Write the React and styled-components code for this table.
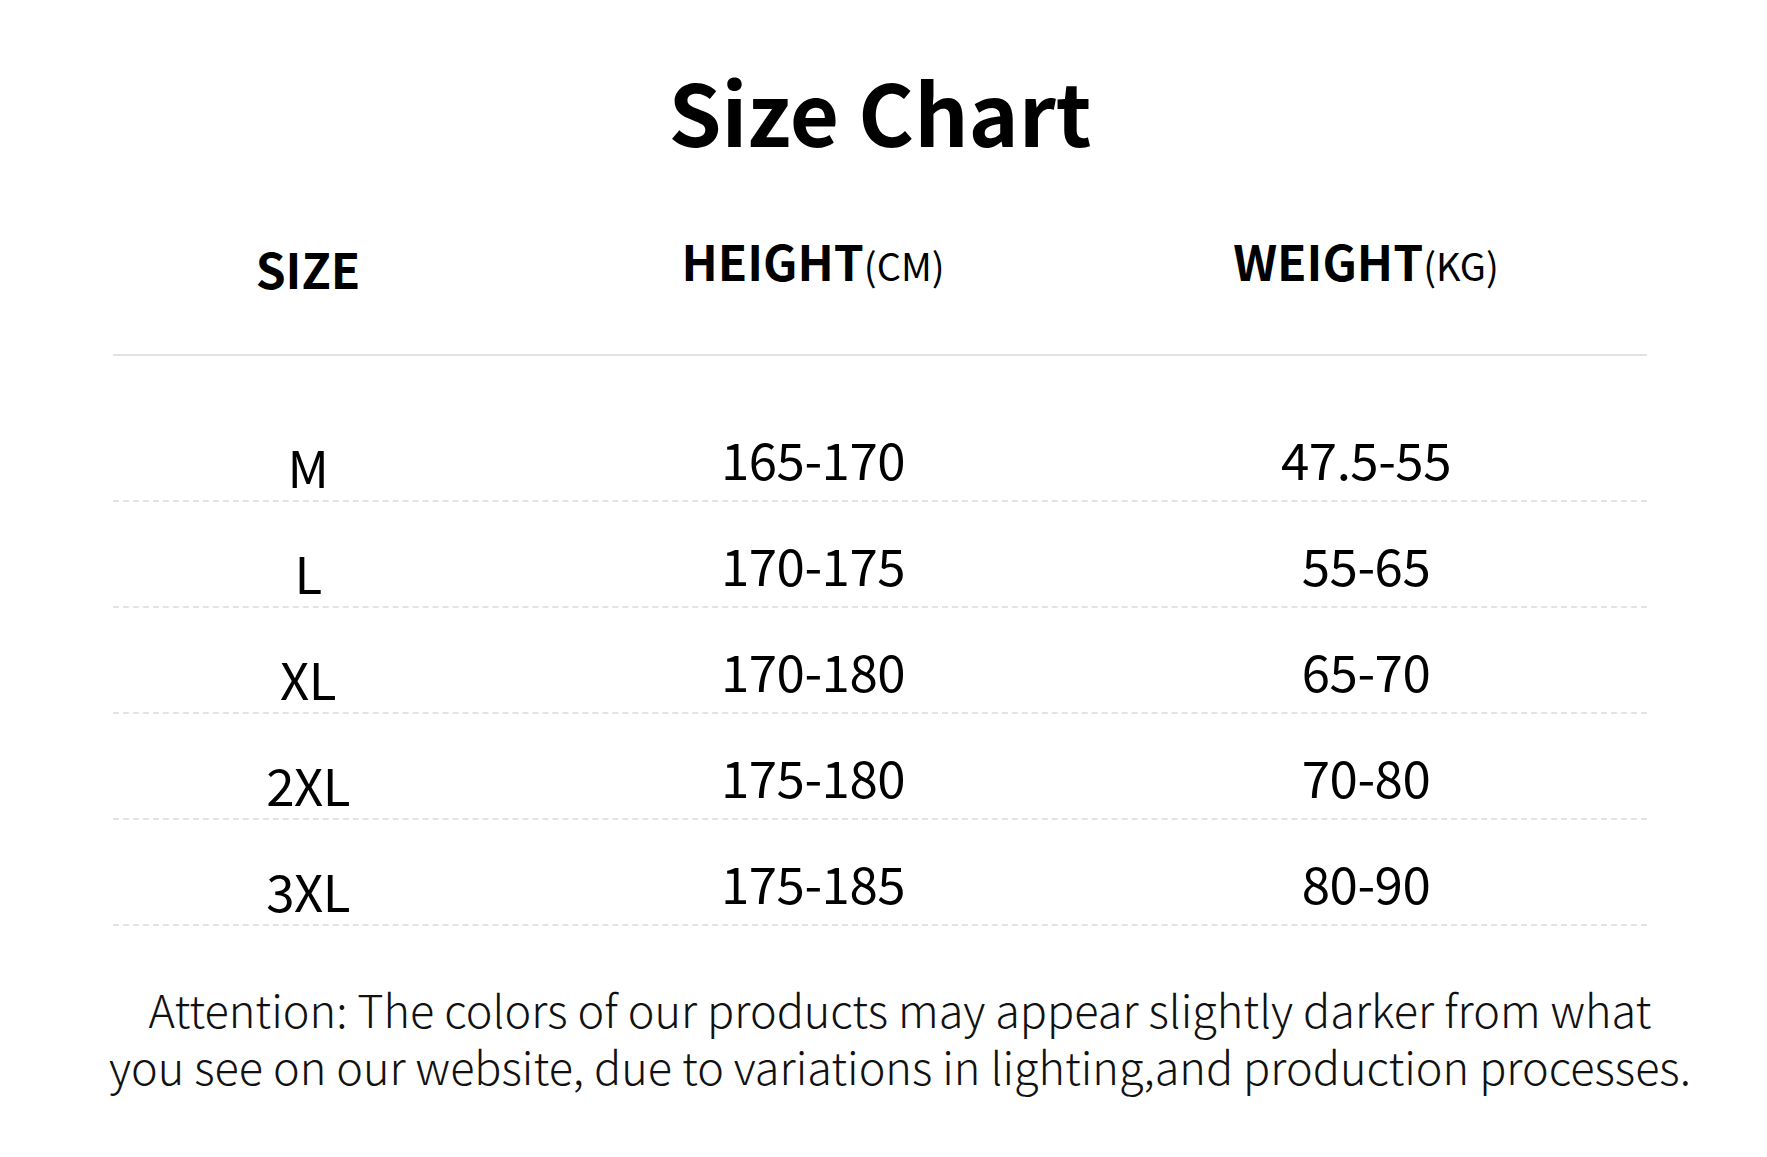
import React from "react";
import styled, { createGlobalStyle } from "styled-components";

const rows = [
  { size: "M", height: "165-170", weight: "47.5-55" },
  { size: "L", height: "170-175", weight: "55-65" },
  { size: "XL", height: "170-180", weight: "65-70" },
  { size: "2XL", height: "175-180", weight: "70-80" },
  { size: "3XL", height: "175-185", weight: "80-90" },
];

const GlobalStyle = createGlobalStyle`
  html, body {
    margin: 0;
    padding: 0;
    background: #ffffff;
  }
  body {
    font-family: "Noto Sans CJK SC", "Noto Sans", sans-serif;
    color: #000000;
  }
`;

const Page = styled.div`
  width: 1767px;
  height: 1157px;
  box-sizing: border-box;
  padding: 60px 0 0 113px;
  overflow: hidden;
`;

const Title = styled.h1`
  margin: 0;
  width: 1534px;
  text-align: center;
  font-size: 85px;
  line-height: 100px;
  font-weight: 700;
`;

const Table = styled.div`
  width: 1534px;
  margin-top: 76px;
`;

const Row = styled.div`
  display: grid;
  grid-template-columns: 390px 620px 486px 1fr;
  align-items: end;
  height: ${(p) => p.$h}px;
  padding-bottom: ${(p) => p.$pb}px;
  box-sizing: border-box;
  border-bottom: ${(p) => (p.$head ? "2px solid #e2e2e2" : "2px dashed #e3e3e3")};
  margin-bottom: ${(p) => (p.$gap ? 40 : 0)}px;
`;

const Cell = styled.div`
  text-align: center;
  font-size: ${(p) => (p.$head ? 48 : 51)}px;
  font-weight: ${(p) => (p.$head ? 700 : 400)};
  letter-spacing: ${(p) => (p.$head ? 0 : -0.5)}px;
  line-height: 1;
  transform: translateY(${(p) => (p.$low ? 8 : 0)}px);
`;

const Unit = styled.span`
  font-size: 38px;
  font-weight: 400;
`;

const Note = styled.p`
  margin: 54px 0 0 -40px;
  width: 1654px;
  text-align: center;
  white-space: nowrap;
  font-size: 45px;
  line-height: 57px;
  font-weight: 300;
  color: #111111;
`;

export default function App() {
  return (
    <>
      <GlobalStyle />
      <Page>
        <Title>Size Chart</Title>
        <Table>
          <Row $head $h={120} $pb={92} $gap>
            <Cell $head $low>SIZE</Cell>
            <Cell $head>
              HEIGHT<Unit>(CM)</Unit>
            </Cell>
            <Cell $head>
              WEIGHT<Unit>(KG)</Unit>
            </Cell>
          </Row>
          {rows.map((r) => (
            <Row key={r.size} $h={106} $pb={16}>
              <Cell $low>{r.size}</Cell>
              <Cell>{r.height}</Cell>
              <Cell>{r.weight}</Cell>
            </Row>
          ))}
        </Table>
        <Note>
          Attention: The colors of our products may appear slightly darker from what
          <br />
          you see on our website, due to variations in lighting,and production processes.
        </Note>
      </Page>
    </>
  );
}
